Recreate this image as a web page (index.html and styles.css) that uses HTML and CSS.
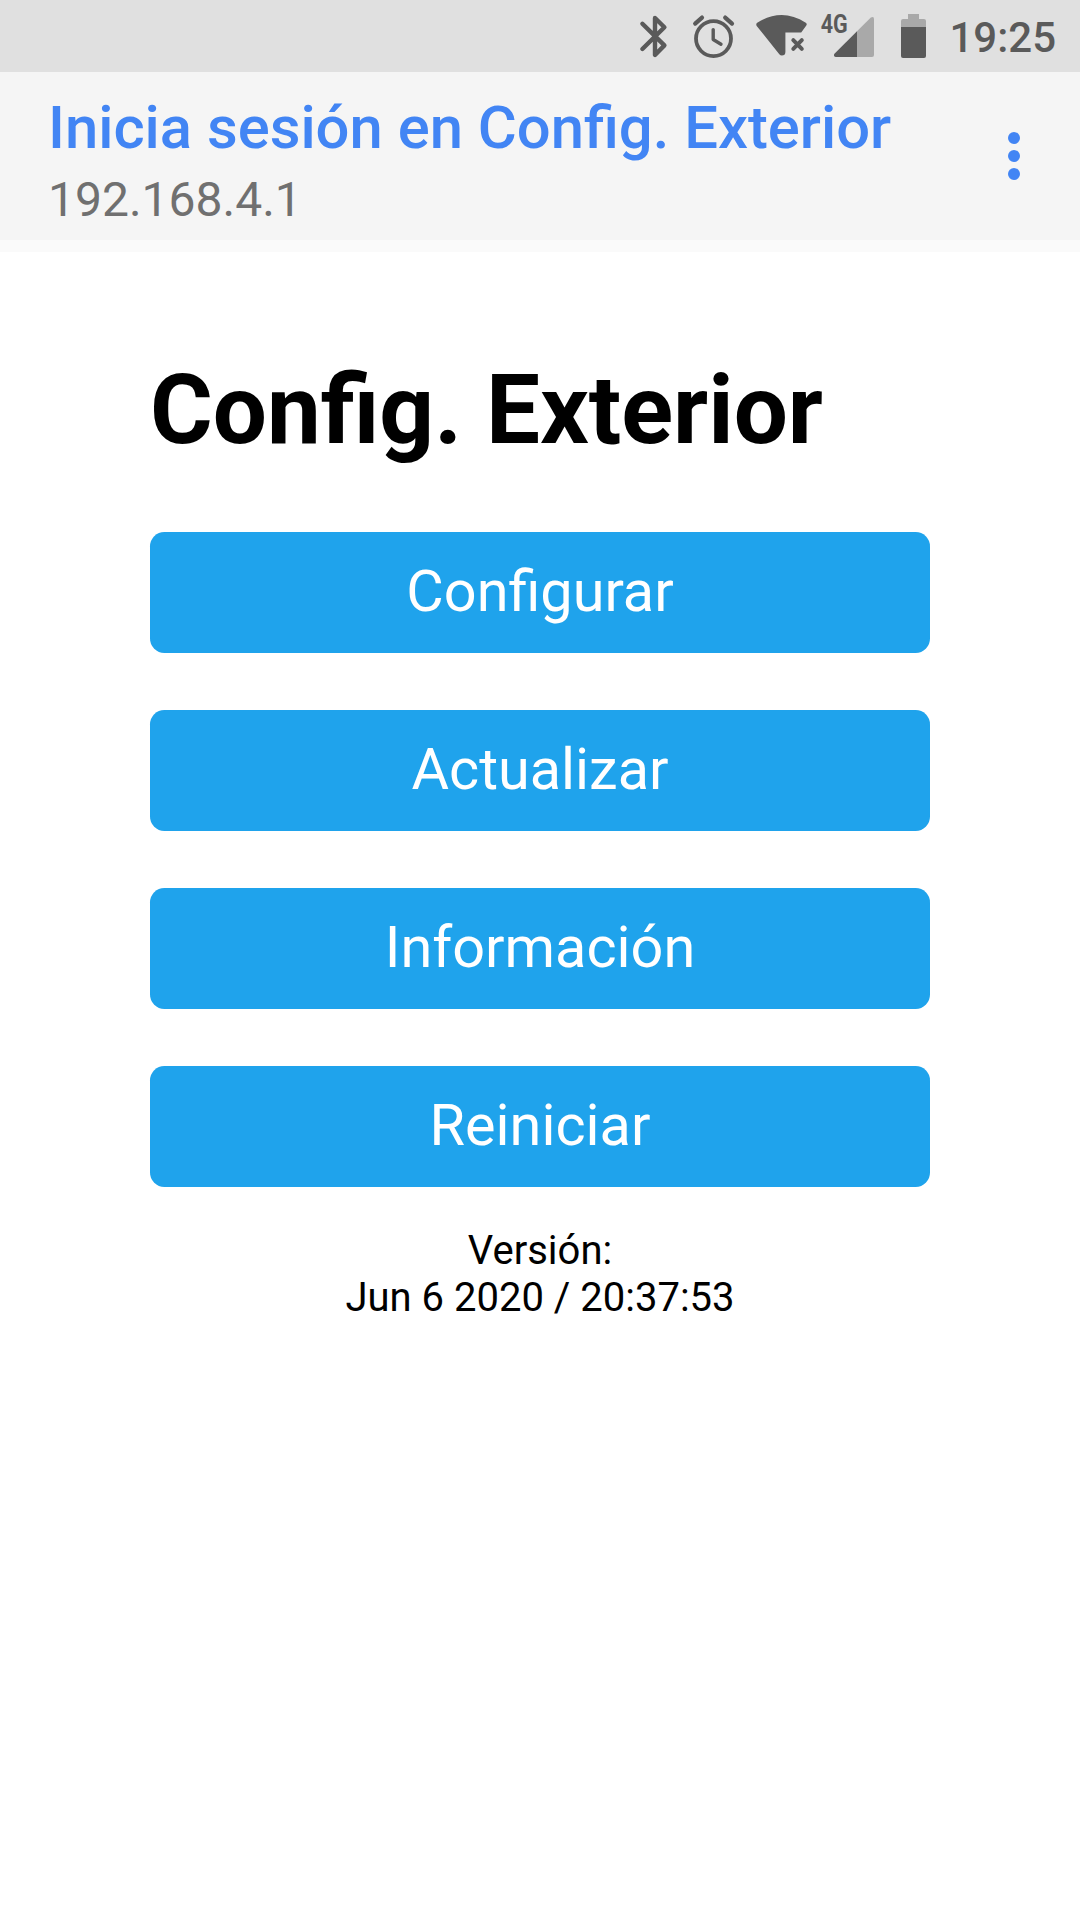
FILE: index.html
```html
<!DOCTYPE html>
<html lang="es">
<head>
<meta charset="utf-8">
<title>Config. Exterior</title>
<link rel="stylesheet" href="styles.css">
</head>
<body>
<div class="status-bar">
  <svg class="icon" width="36" height="72" viewBox="636 0 36 72" aria-label="Bluetooth">
    <path class="stroke" stroke-width="4.4" d="M642.4 23.8 664.4 45.4 655 55V18L664.4 27.2 642.4 49"/>
  </svg>
  <svg class="icon" width="48" height="72" viewBox="689 0 48 72" aria-label="Alarma">
    <circle class="stroke" cx="713.5" cy="38.6" r="17.5" stroke-width="3.8"/>
    <path class="stroke" stroke-width="4.2" d="M695.2 23.6 702 17.6M725.2 17.6 732 23.6"/>
    <path class="stroke" stroke-width="3.4" d="M713.2 29.6V39.5L721 44.2"/>
  </svg>
  <svg class="icon" width="54" height="72" viewBox="754 0 54 72" aria-label="Wi-Fi sin Internet">
    <path class="dark" d="M757.2 22.7C774 12.4 789.5 12.4 805.8 22.7Q807.4 24 806.3 25.6L801.2 32.4H785.4V52Q785.4 55.5 781.8 55.5Q780.4 55.5 779.3 54.2L756.7 26Q755.6 24 757.2 22.7Z"/>
    <path class="stroke" stroke-width="4" d="M793.3 40.2 801.8 48.8M801.8 40.2 793.3 48.8"/>
  </svg>
  <svg class="icon signal" width="57" height="72" viewBox="819 0 57 72" aria-label="Señal móvil">
    <text class="network" x="820.7" y="33.3" textLength="27" lengthAdjust="spacingAndGlyphs">4G</text>
    <path class="light" d="M857 31.2 870.8 17.6Q874 15.8 874 19V55Q874 57 872 57H857Z"/>
    <path class="dark" d="M857 31.2V57H836Q833.2 56.5 834.2 54Z"/>
  </svg>
  <svg class="icon" width="29" height="72" viewBox="899 0 29 72" aria-label="Batería">
    <path class="light" d="M908 14H919V19H924Q926 19 926 21V27H901V21Q901 19 903 19H908Z"/>
    <path class="dark" d="M901 27H926V56Q926 58 924 58H903Q901 58 901 56Z"/>
  </svg>
  <span class="clock">19:25</span>
</div>
<header class="app-bar">
  <div class="app-bar-text">
    <div class="app-bar-title">Inicia sesión en Config. Exterior</div>
    <div class="app-bar-host">192.168.4.1</div>
  </div>
  <svg class="menu" width="12" height="48" viewBox="0 0 12 48" aria-label="Más opciones">
    <circle cx="6" cy="6" r="6"/>
    <circle cx="6" cy="24" r="6"/>
    <circle cx="6" cy="42" r="6"/>
  </svg>
</header>
<div class="progress"></div>
<main class="portal">
  <h1 class="heading">Config. Exterior</h1>
  <div class="actions">
    <button class="action">Configurar</button>
    <button class="action">Actualizar</button>
    <button class="action">Información</button>
    <button class="action">Reiniciar</button>
  </div>
  <p class="version">Versión:<br>Jun 6 2020 / 20:37:53</p>
</main>
</body>
</html>
```

FILE: styles.css
```css
* {
  box-sizing: border-box;
}

body {
  margin: 0;
  min-height: 1920px;
  background: #fff;
  color: #000;
  font-family: Roboto, sans-serif;
}

.status-bar {
  display: flex;
  align-items: center;
  justify-content: flex-end;
  gap: 17px;
  height: 72px;
  padding-right: 24px;
  background: #e0e0e0;
  color: #5a5a5a;
}

.icon {
  display: block;
  flex: none;
}

.signal {
  margin: 0 6px 0 -6px;
}

.stroke {
  fill: none;
  stroke: #5a5a5a;
  stroke-linecap: round;
  stroke-linejoin: round;
}

.dark {
  fill: #5a5a5a;
}

.light {
  fill: #a9a9a9;
}

.network {
  fill: #5a5a5a;
  font-size: 25px;
  font-weight: 700;
}

.clock {
  margin-left: 4px;
  padding-top: 4px;
  font-size: 42px;
  font-weight: 500;
  line-height: 72px;
}

.app-bar {
  display: flex;
  justify-content: space-between;
  height: 168px;
  padding: 20px 60px 0 48px;
  background: #f5f5f5;
}

.app-bar-title {
  color: #4285f4;
  font-size: 59.75px;
  font-weight: 500;
  line-height: 73px;
  white-space: nowrap;
}

.app-bar-host {
  margin-top: 7px;
  color: #707070;
  font-size: 48px;
  line-height: 56px;
}

.menu {
  margin-top: 40px;
  fill: #4285f4;
}

.progress {
  height: 12px;
  background: #fafafa;
}

.portal {
  width: 780px;
  margin: 0 auto;
  padding-top: 102px;
}

.heading {
  margin: 0 0 66px;
  font-size: 96px;
  font-weight: 700;
  line-height: 112px;
}

.actions {
  display: grid;
  gap: 57px;
}

.action {
  height: 121px;
  padding: 0 0 2px;
  border: 0;
  border-radius: 14.4px;
  background: #1fa3ec;
  color: #fff;
  font-family: inherit;
  font-size: 57.6px;
  line-height: 119px;
}

.version {
  margin: 40px 0 0;
  font-size: 40px;
  line-height: 47px;
  text-align: center;
}
```
